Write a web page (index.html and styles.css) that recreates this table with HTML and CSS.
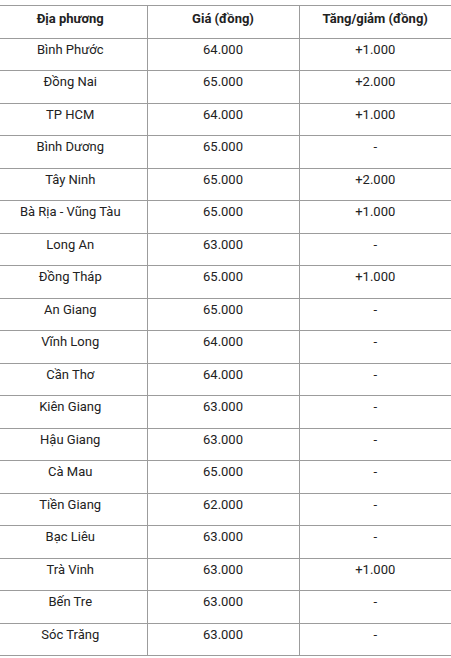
FILE: index.html
```html
<!DOCTYPE html>
<html lang="vi">
<head>
<meta charset="utf-8">
<link rel="stylesheet" href="styles.css">
</head>
<body>
<table class="price-table">
  <colgroup>
    <col class="c1"><col class="c2"><col class="c3">
  </colgroup>
  <thead>
    <tr><th class="first">Địa phương</th><th>Giá (đồng)</th><th>Tăng/giảm (đồng)</th></tr>
  </thead>
  <tbody>
    <tr><td class="first">Bình Phước</td><td>64.000</td><td>+1.000</td></tr>
    <tr><td class="first">Đồng Nai</td><td>65.000</td><td>+2.000</td></tr>
    <tr><td class="first">TP HCM</td><td>64.000</td><td>+1.000</td></tr>
    <tr><td class="first">Bình Dương</td><td>65.000</td><td>-</td></tr>
    <tr><td class="first">Tây Ninh</td><td>65.000</td><td>+2.000</td></tr>
    <tr><td class="first">Bà Rịa - Vũng Tàu</td><td>65.000</td><td>+1.000</td></tr>
    <tr><td class="first">Long An</td><td>63.000</td><td>-</td></tr>
    <tr><td class="first">Đồng Tháp</td><td>65.000</td><td>+1.000</td></tr>
    <tr><td class="first">An Giang</td><td>65.000</td><td>-</td></tr>
    <tr><td class="first">Vĩnh Long</td><td>64.000</td><td>-</td></tr>
    <tr><td class="first">Cần Thơ</td><td>64.000</td><td>-</td></tr>
    <tr><td class="first">Kiên Giang</td><td>63.000</td><td>-</td></tr>
    <tr><td class="first">Hậu Giang</td><td>63.000</td><td>-</td></tr>
    <tr><td class="first">Cà Mau</td><td>65.000</td><td>-</td></tr>
    <tr><td class="first">Tiền Giang</td><td>62.000</td><td>-</td></tr>
    <tr><td class="first">Bạc Liêu</td><td>63.000</td><td>-</td></tr>
    <tr><td class="first">Trà Vinh</td><td>63.000</td><td>+1.000</td></tr>
    <tr><td class="first">Bến Tre</td><td>63.000</td><td>-</td></tr>
    <tr><td class="first">Sóc Trăng</td><td>63.000</td><td>-</td></tr>
  </tbody>
</table>
</body>
</html>
```
FILE: styles.css
```css
html, body {
  margin: 0;
  padding: 0;
  background: #ffffff;
}
body {
  padding-top: 5px;
  font-family: Roboto, "Liberation Sans", Arial, sans-serif;
  font-size: 13px;
  color: #222222;
}
.price-table {
  width: 451px;
  border-collapse: collapse;
  table-layout: fixed;
}
.c1 { width: 147px; }
.c2 { width: 152px; }
.c3 { width: 152px; }
.price-table th,
.price-table td {
  border-top: 1px solid #9c9c9c;
  border-bottom: 1px solid #9c9c9c;
  border-left: 1px solid #9c9c9c;
  text-align: center;
  vertical-align: top;
  line-height: 18px;
  padding: 0;
}
.price-table th.first,
.price-table td.first {
  border-left: none;
  padding-right: 6px;
}
.price-table th {
  height: 32.5px;
  box-sizing: border-box;
  padding-top: 4px;
  font-weight: bold;
}
.price-table td {
  height: 32.5px;
  box-sizing: border-box;
  padding-top: 2px;
  font-weight: normal;
}
```
